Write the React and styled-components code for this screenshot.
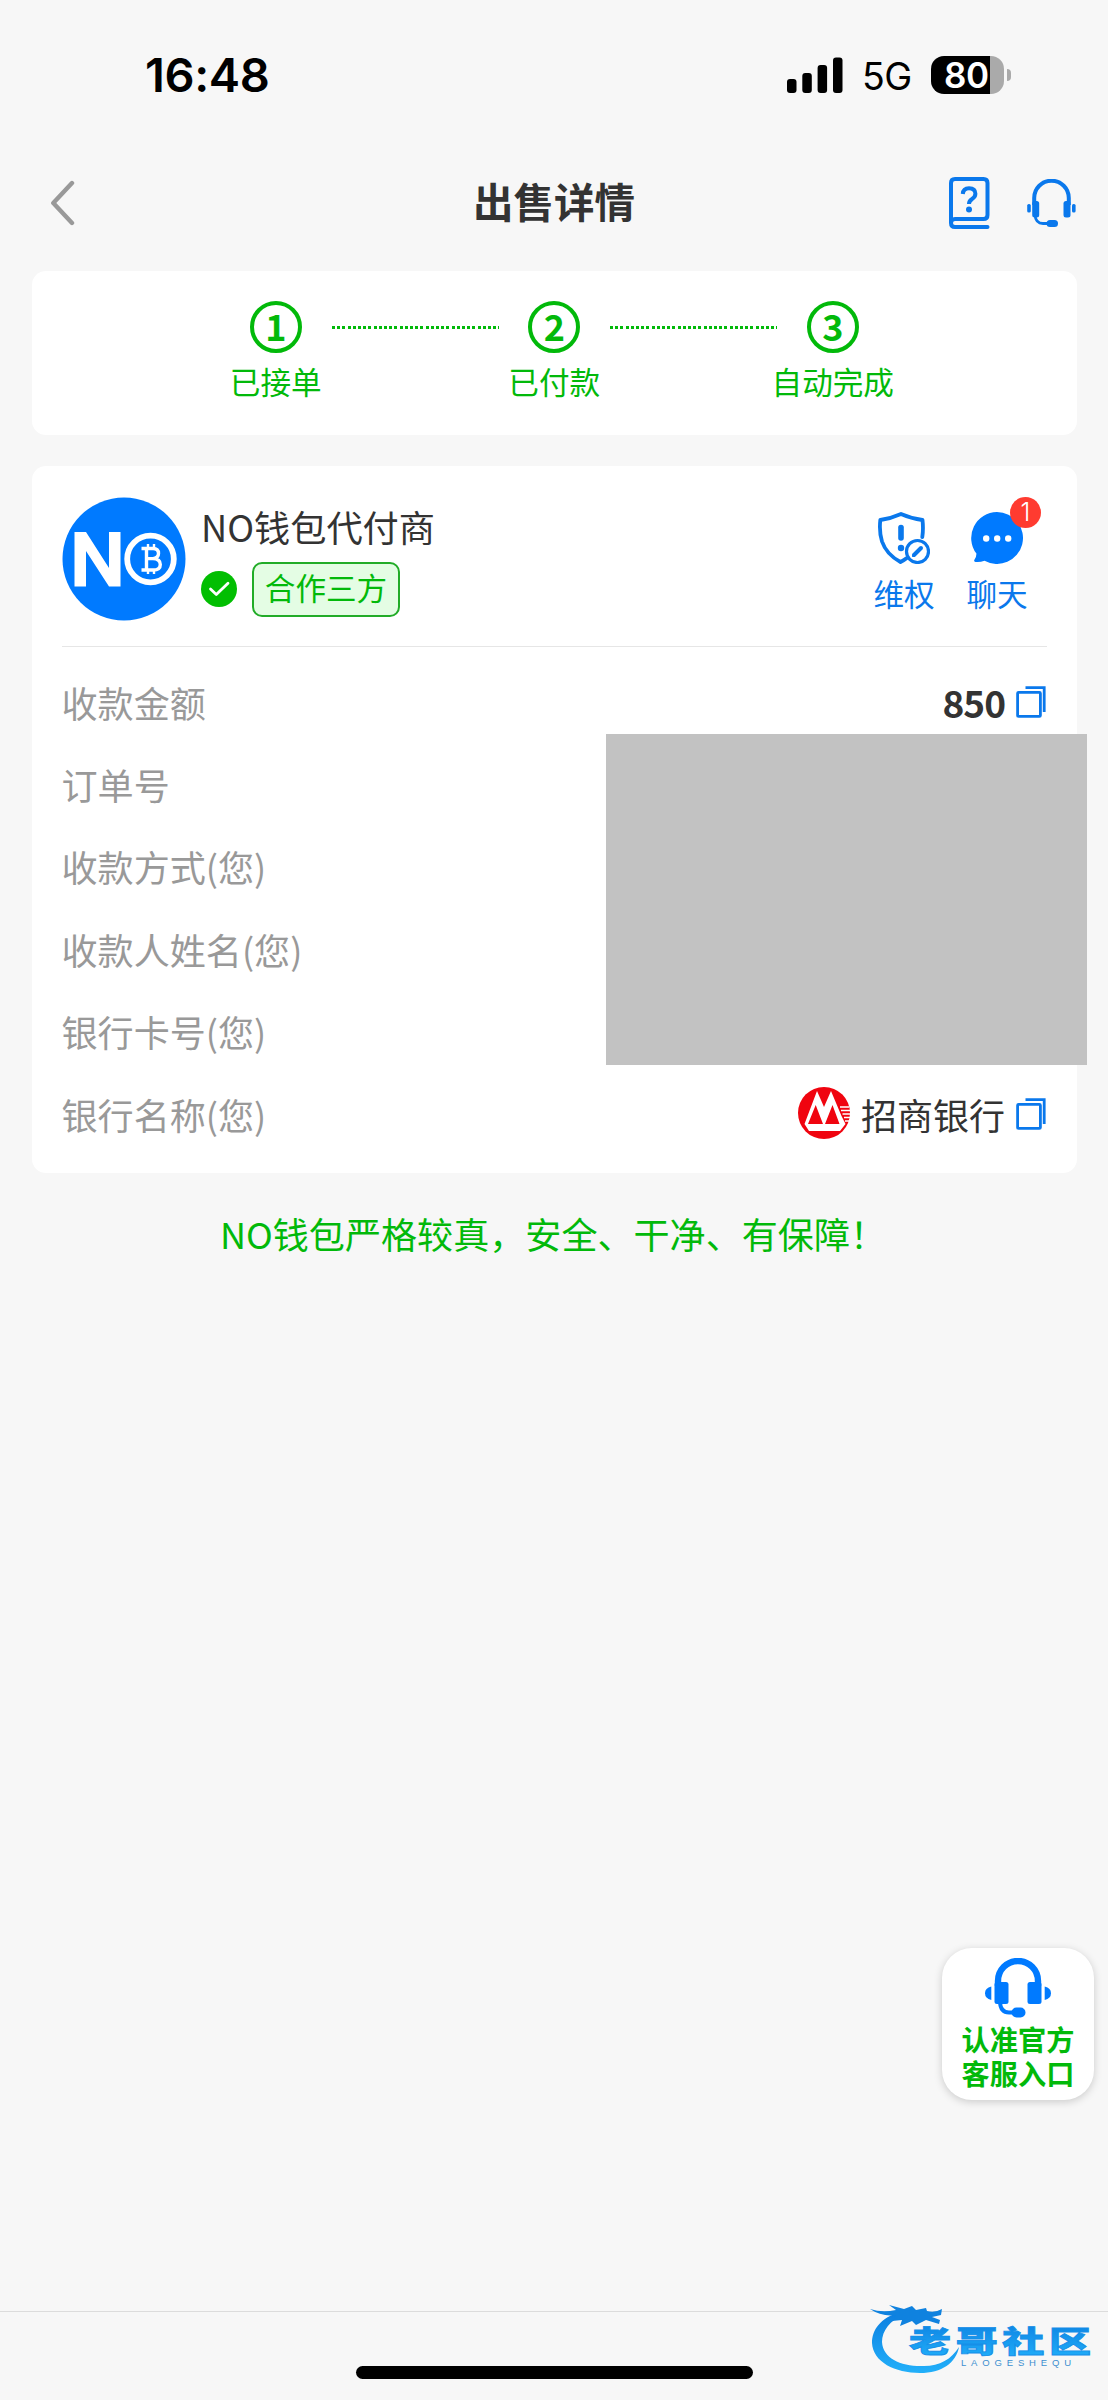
import React from 'react'
import styled, { createGlobalStyle } from 'styled-components'

const green = '#02b90a'
const blue = '#0a78ec'
const cjk = `'Noto Sans CJK SC', sans-serif`

const GlobalStyle = createGlobalStyle`
  * {
    box-sizing: border-box;
  }

  body {
    margin: 0;
    background: #f7f7f7;
    font-family: ${cjk};
    color: #333;
  }
`

const Page = styled.div`
  position: relative;
  width: 1108px;
  height: 2400px;
  overflow: hidden;
  display: flex;
  flex-direction: column;
  background: #f7f7f7;
`

const StatusBar = styled.div`
  height: 151px;
  padding: 0 97px 2px 145px;
  display: flex;
  align-items: center;
  justify-content: space-between;
  font-family: Inter, sans-serif;
  color: #000;
`

const Time = styled.span`
  font-size: 47px;
  font-weight: 600;
  line-height: 56px;
  letter-spacing: -0.4px;
`

const StatusIcons = styled.div`
  display: flex;
  align-items: center;
`

const Network = styled.span`
  width: 70px;
  margin-left: 18px;
  margin-right: -1px;
  font-size: 37.5px;
  line-height: 42px;
  padding-top: 4px;
  letter-spacing: -0.6px;
`

const Battery = styled.div`
  width: 73px;
  height: 38px;
  border-radius: 13px;
  background: linear-gradient(90deg, #000 59px, #aaa 59px);
  color: #fff;
  font-size: 35px;
  font-weight: 600;
  line-height: 38px;
  padding-left: 13px;
  letter-spacing: -0.5px;
`

const BatteryTip = styled.div`
  width: 4px;
  height: 12px;
  margin-left: 3px;
  border-radius: 0 6px 6px 0;
  background: #aaa;
`

const NavBar = styled.header`
  height: 104px;
  padding: 0 32px 0 51px;
  display: grid;
  grid-template-columns: 1fr auto 1fr;
  align-items: center;
`

const Title = styled.h1`
  margin: -5px 0 0 -19px;
  font-size: 40.5px;
  font-weight: 700;
  line-height: 60px;
`

const NavActions = styled.div`
  display: flex;
  justify-content: flex-end;
  align-items: center;
  gap: 37px;
`

const Card = styled.section`
  margin: 0 31px 0 31.5px;
  border-radius: 14px;
  background: #fff;
`

const StepsCard = styled(Card)`
  height: 164.5px;
  margin-top: 15.5px;
  padding-top: 30px;
  display: flex;
  justify-content: center;
`

const Step = styled.div`
  width: 111.5px;
  display: flex;
  flex-direction: column;
  align-items: center;
  color: ${green};
`

const StepNumber = styled.div`
  width: 52px;
  height: 52px;
  border: 4px solid ${green};
  border-radius: 50%;
  font-size: 36px;
  font-weight: 700;
  line-height: 41px;
  text-align: center;
`

const StepLabel = styled.div`
  margin-top: 6px;
  font-size: 30.6px;
  line-height: 44px;
  white-space: nowrap;
`

const StepLine = styled.div`
  width: 167px;
  height: 3px;
  margin-top: 25px;
  background: repeating-linear-gradient(90deg, ${green} 0 3px, transparent 3px 5.2px);
`

const DetailCard = styled(Card)`
  height: 707px;
  margin-top: 30.5px;
  padding: 0 30px;
`

const Merchant = styled.div`
  height: 181px;
  padding-top: 31px;
  display: flex;
  border-bottom: 1.5px solid #e6e6e6;
`

const MerchantInfo = styled.div`
  flex: 1;
  padding-left: 15.5px;
`

const MerchantName = styled.div`
  height: 65px;
  padding-top: 2px;
  font-size: 36.2px;
  line-height: 54px;
`

const Tags = styled.div`
  display: flex;
  align-items: center;
  gap: 15px;
`

const Tag = styled.span`
  width: 148px;
  height: 55px;
  border: 2px solid #22ac28;
  border-radius: 10px;
  background: #e4fde4;
  color: ${green};
  font-size: 30.6px;
  line-height: 47px;
  text-align: center;
`

const Actions = styled.div`
  display: flex;
  gap: 31px;
  padding-top: 15px;
  margin-right: 19px;
`

const Action = styled.div`
  position: relative;
  width: 62px;
  display: flex;
  flex-direction: column;
  align-items: center;
  color: ${blue};
  font-size: 30.6px;
  line-height: 44px;
  white-space: nowrap;

  svg {
    margin-bottom: 7px;
  }
`

const Unread = styled.span`
  position: absolute;
  top: -15px;
  right: -13px;
  width: 31px;
  height: 31px;
  border-radius: 50%;
  background: #ff3b30;
  color: #fff;
  font-family: Inter, sans-serif;
  font-size: 25px;
  font-weight: 300;
  line-height: 31px;
  text-align: center;
`

const Rows = styled.div`
  padding-top: 14px;
`

const Row = styled.div`
  height: 82.4px;
  display: flex;
  align-items: center;
  justify-content: space-between;
  font-size: 36.1px;
  line-height: 54px;
`

const RowLabel = styled.span`
  color: #999;
`

const RowValue = styled.span`
  display: flex;
  align-items: center;
  gap: 11px;
  font-weight: ${({ $bold }) => ($bold ? 700 : 400)};
  font-size: ${({ $bold }) => ($bold ? '37px' : '36px')};
  letter-spacing: ${({ $bold }) => ($bold ? '-1px' : '0')};
`

const BankLogo = styled.svg`
  margin-top: -2px;
`

const CopyGlyph = styled.svg`
  margin: 0 1px 0 0;
`

const Redacted = styled.div`
  position: absolute;
  left: 605.5px;
  top: 734px;
  width: 481px;
  height: 331px;
  background: #c2c2c2;
`

const Slogan = styled.p`
  margin: 33px 0 0 -2px;
  color: ${green};
  font-size: 36.1px;
  line-height: 54px;
  text-align: center;
`

const Support = styled.div`
  position: absolute;
  left: 942px;
  top: 1948px;
  width: 152px;
  height: 152px;
  padding-top: 10px;
  border-radius: 30px;
  background: #fff;
  box-shadow: 0 2px 9px rgba(0, 0, 0, 0.18);
  display: flex;
  flex-direction: column;
  align-items: center;
`

const SupportText = styled.div`
  width: 114px;
  margin-top: 3px;
  color: ${green};
  font-size: 28.2px;
  font-weight: 700;
  line-height: 34px;
  text-align: center;
`

const Footer = styled.footer`
  height: 89.5px;
  margin-top: auto;
  border-top: 1.5px solid #dcdcdc;
  display: flex;
  justify-content: center;
  align-items: flex-end;
`

const HomeIndicator = styled.div`
  width: 397px;
  height: 13px;
  margin-bottom: 21px;
  border-radius: 7px;
  background: #000;
`

const Watermark = styled.svg`
  position: absolute;
  left: 868px;
  top: 2300px;
`

const SignalIcon = () => (
  <svg width="58" height="36" viewBox="0 0 58 36">
    <rect x="1" y="22" width="9.5" height="14" rx="3" />
    <rect x="16.3" y="16" width="9.5" height="20" rx="3" />
    <rect x="31.6" y="8" width="9.5" height="28" rx="3" />
    <rect x="47" y="0.5" width="9.5" height="35.5" rx="3" />
  </svg>
)

const BackIcon = () => (
  <svg width="26" height="46" viewBox="0 0 26 46" fill="none" stroke="#999" strokeWidth="4.4" strokeLinecap="round" strokeLinejoin="round">
    <path d="M21 3 L2.3 23 L21 43" />
  </svg>
)

const GuideIcon = () => (
  <svg width="41" height="52" viewBox="0 0 41 52" fill="none" stroke={blue} strokeWidth="4" strokeLinecap="round">
    <path d="M2 46 V6 Q2 2 6 2 H34.5 Q38.5 2 38.5 6 V38 Q38.5 42 34.5 42 H6 Q2 42 2 46 Q2 50 6 50 H38.5" />
    <path d="M13.8 17 Q14.2 11.3 20 11.3 Q26.4 11.3 26.4 16.8 Q26.4 20 22.8 22.2 Q20 24 20 27" strokeLinecap="butt" />
    <circle cx="20" cy="32.5" r="3" fill={blue} stroke="none" />
  </svg>
)

const HeadsetIcon = () => (
  <svg width="49" height="49" viewBox="0 0 49 49">
    <path d="M7.2 26 V19 A17.3 17.3 0 0 1 41.8 19 V26" fill="none" stroke={blue} strokeWidth="4" />
    <rect x="5.2" y="22" width="7" height="16.5" rx="2.5" fill={blue} />
    <rect x="36.5" y="22" width="7" height="16.5" rx="2.5" fill={blue} />
    <rect x="0.2" y="25" width="3.6" height="8.5" rx="1.6" fill={blue} />
    <rect x="45" y="25" width="3.6" height="8.5" rx="1.6" fill={blue} />
    <path d="M8 36 Q8.6 44.5 16 44.5 H22" fill="none" stroke={blue} strokeWidth="2.8" />
    <rect x="19.5" y="41" width="11.5" height="7" rx="3.5" fill={blue} />
  </svg>
)

const SupportHeadset = () => (
  <svg width="66" height="61" viewBox="0 0 66 61">
    <path d="M13 28 V23 A20 20 0 0 1 53 23 V28" fill="none" stroke="#007aff" strokeWidth="6.4" />
    <rect x="9.5" y="24" width="14" height="22" rx="2.5" fill="#007aff" />
    <rect x="42.5" y="24" width="14" height="22" rx="2.5" fill="#007aff" />
    <path d="M6.3 28.5 V42 Q0 40.5 0 35.2 Q0 30 6.3 28.5 Z" fill="#007aff" />
    <path d="M59.7 28.5 V42 Q66 40.5 66 35.2 Q66 30 59.7 28.5 Z" fill="#007aff" />
    <path d="M15 44 Q15.5 54.5 24 54.5 H29" fill="none" stroke="#007aff" strokeWidth="4" />
    <rect x="26.5" y="49.5" width="14" height="10" rx="5" fill="#007aff" />
  </svg>
)

const Avatar = () => (
  <svg width="124" height="124" viewBox="0 0 124 124">
    <circle cx="62" cy="62" r="61.5" fill="#007aff" />
    <path d="M12.5 89.5 V35 H24 L47 71 V35 H58.5 V89.5 H47 L24 54 V89.5 Z" fill="#fff" />
    <circle cx="88.5" cy="62" r="23.3" fill="none" stroke="#fff" strokeWidth="5.8" />
    <g fill="none" stroke="#fff">
      <path d="M79.5 51.5 H91 Q96.5 51.5 96.5 56.5 Q96.5 61 91 61.6 Q98.3 62 98.3 67.4 Q98.3 73 91 73 H79.5 M84.5 51.5 V73 M84.5 61.6 H92" strokeWidth="3.4" />
      <path d="M86 47 V52 M92 47 V52 M86 72.5 V77 M92 72.5 V77" strokeWidth="2.4" />
    </g>
  </svg>
)

const CheckIcon = () => (
  <svg width="36" height="36" viewBox="0 0 36 36">
    <circle cx="18" cy="18" r="18" fill="#02be02" />
    <path d="M9.5 18 L15.3 23.6 L27 12.2" fill="none" stroke="#fff" strokeWidth="2.8" strokeLinecap="round" strokeLinejoin="round" />
  </svg>
)

const ShieldIcon = () => (
  <svg width="52" height="52" viewBox="0 0 52 52" fill="none" stroke={blue} strokeWidth="3.8" strokeLinecap="round" strokeLinejoin="round">
    <path d="M44.3 25 Q45.5 17 44.5 8 Q33 6.5 23 2 Q13 6.5 2.3 8 Q1 20 4 29.5 Q8.5 42.5 22.5 50 Q26 48.3 28.5 46.3" />
    <path d="M23 15.5 L23 26" strokeWidth="5.6" />
    <circle cx="23" cy="36" r="3.2" fill={blue} stroke="none" />
    <circle cx="39.5" cy="39.5" r="11" strokeWidth="3.2" fill="#fff" />
    <path d="M36 43 L43 36" strokeWidth="4" />
    <path d="M35 44 L36 43" strokeWidth="2" />
  </svg>
)

const ChatIcon = () => (
  <svg width="52" height="52" viewBox="0 0 52 52">
    <path d="M26 0 A26 26 0 1 1 13.5 48.8 Q9 50.5 4.5 50 Q2.6 49.5 3.3 48 Q5.5 45 5.4 41.6 A26 26 0 0 1 26 0 Z" fill="#007aff" />
    <circle cx="15.2" cy="26.5" r="3.2" fill="#fff" />
    <circle cx="26.2" cy="26.5" r="3.2" fill="#fff" />
    <circle cx="37.2" cy="26.5" r="3.2" fill="#fff" />
  </svg>
)

const CopyIcon = () => (
  <CopyGlyph width="30" height="32" viewBox="0 0 30 32" fill="none" stroke={blue} strokeWidth="2.8">
    <rect x="1.6" y="6.4" width="22.8" height="24" rx="1" />
    <path d="M9.5 1.6 H28.2 V26" />
  </CopyGlyph>
)

const BankIcon = () => (
  <BankLogo width="52" height="52" viewBox="0 0 52 52">
    <circle cx="26" cy="26" r="26" fill="#f0040f" />
    <path d="M19 4 L26 20 L33 4 L43.5 29 L47.5 37 L42 44 H11 L6.5 37 Z" fill="#fff" />
    <path d="M10 37 L17.7 18 L25 37 Z M27 37 L34.5 18 L41.5 37 Z" fill="#f0040f" />
    <path d="M42 20 H51 M43 23.5 H52 M44.5 27 H52 M46 30.5 H52 M47 34 H51" stroke="#fff" strokeWidth="1.4" />
  </BankLogo>
)

const steps = ['已接单', '已付款', '自动完成']

const rows = [
  { label: '收款金额', value: '850', bold: true },
  { label: '订单号' },
  { label: '收款方式(您)' },
  { label: '收款人姓名(您)' },
  { label: '银行卡号(您)' },
  { label: '银行名称(您)', value: '招商银行', icon: <BankIcon /> },
]

const App = () => {
  return (
    <>
      <GlobalStyle />
      <Page>
        <StatusBar>
          <Time>16:48</Time>
          <StatusIcons>
            <SignalIcon />
            <Network>5G</Network>
            <Battery>80</Battery>
            <BatteryTip />
          </StatusIcons>
        </StatusBar>
        <NavBar>
          <BackIcon />
          <Title>出售详情</Title>
          <NavActions>
            <GuideIcon />
            <HeadsetIcon />
          </NavActions>
        </NavBar>
        <StepsCard>
          {steps.map((label, i) => (
            <React.Fragment key={label}>
              {i > 0 && <StepLine />}
              <Step>
                <StepNumber>{i + 1}</StepNumber>
                <StepLabel>{label}</StepLabel>
              </Step>
            </React.Fragment>
          ))}
        </StepsCard>
        <DetailCard>
          <Merchant>
            <Avatar />
            <MerchantInfo>
              <MerchantName>NO钱包代付商</MerchantName>
              <Tags>
                <CheckIcon />
                <Tag>合作三方</Tag>
              </Tags>
            </MerchantInfo>
            <Actions>
              <Action>
                <ShieldIcon />
                维权
              </Action>
              <Action>
                <ChatIcon />
                聊天
                <Unread>1</Unread>
              </Action>
            </Actions>
          </Merchant>
          <Rows>
            {rows.map((row) => (
              <Row key={row.label}>
                <RowLabel>{row.label}</RowLabel>
                {row.value && (
                  <RowValue $bold={row.bold}>
                    {row.icon}
                    {row.value}
                    <CopyIcon />
                  </RowValue>
                )}
              </Row>
            ))}
          </Rows>
        </DetailCard>
        <Slogan>NO钱包严格较真，安全、干净、有保障！</Slogan>
        <Footer>
          <HomeIndicator />
        </Footer>
        <Redacted />
        <Support>
          <SupportHeadset />
          <SupportText>认准官方客服入口</SupportText>
        </Support>
        <Watermark width="230" height="80" viewBox="0 0 230 80">
          <defs>
            <linearGradient id="wave" x1="0" y1="0" x2="0" y2="1">
              <stop offset="0" stopColor="#0b7ee0" />
              <stop offset="1" stopColor="#22b0fa" />
            </linearGradient>
          </defs>
          <path d="M32 12 C12 18 4 30 4 43 C5 62 27 73 52 73 C74 73 88 63 91 47 C83 60 70 67 53 66 C32 66 15 58 14 42 C14 31 22 20 36 15 Z" fill="url(#wave)" />
          <path d="M2 9 Q14 13 28 10 L21 5 L36 9 L44 6 L48 10 L58 8 L59 11 Q67 13 74 9 L73 15 L64 17 L72 20 L71 24 L58 20 L48 25 L44 21 L32 26 L34 20 L24 21 L28 15 Q14 17 2 9 Z" fill="#0f82df" />
          <text
            x="41"
            y="0"
            textLength="182"
            fontFamily={cjk}
            fontSize="42"
            fontWeight="900"
            fill="url(#wave)"
            stroke="#168fe8"
            strokeWidth="1.2"
            transform="translate(0 52) scale(1 0.7)"
          >
            老哥社区
          </text>
          <text x="93" y="66" textLength="110" fontFamily="Liberation Sans, sans-serif" fontSize="9.5" fill="#3d8fd0">
            LAOGESHEQU
          </text>
        </Watermark>
      </Page>
    </>
  )
}

export default App
